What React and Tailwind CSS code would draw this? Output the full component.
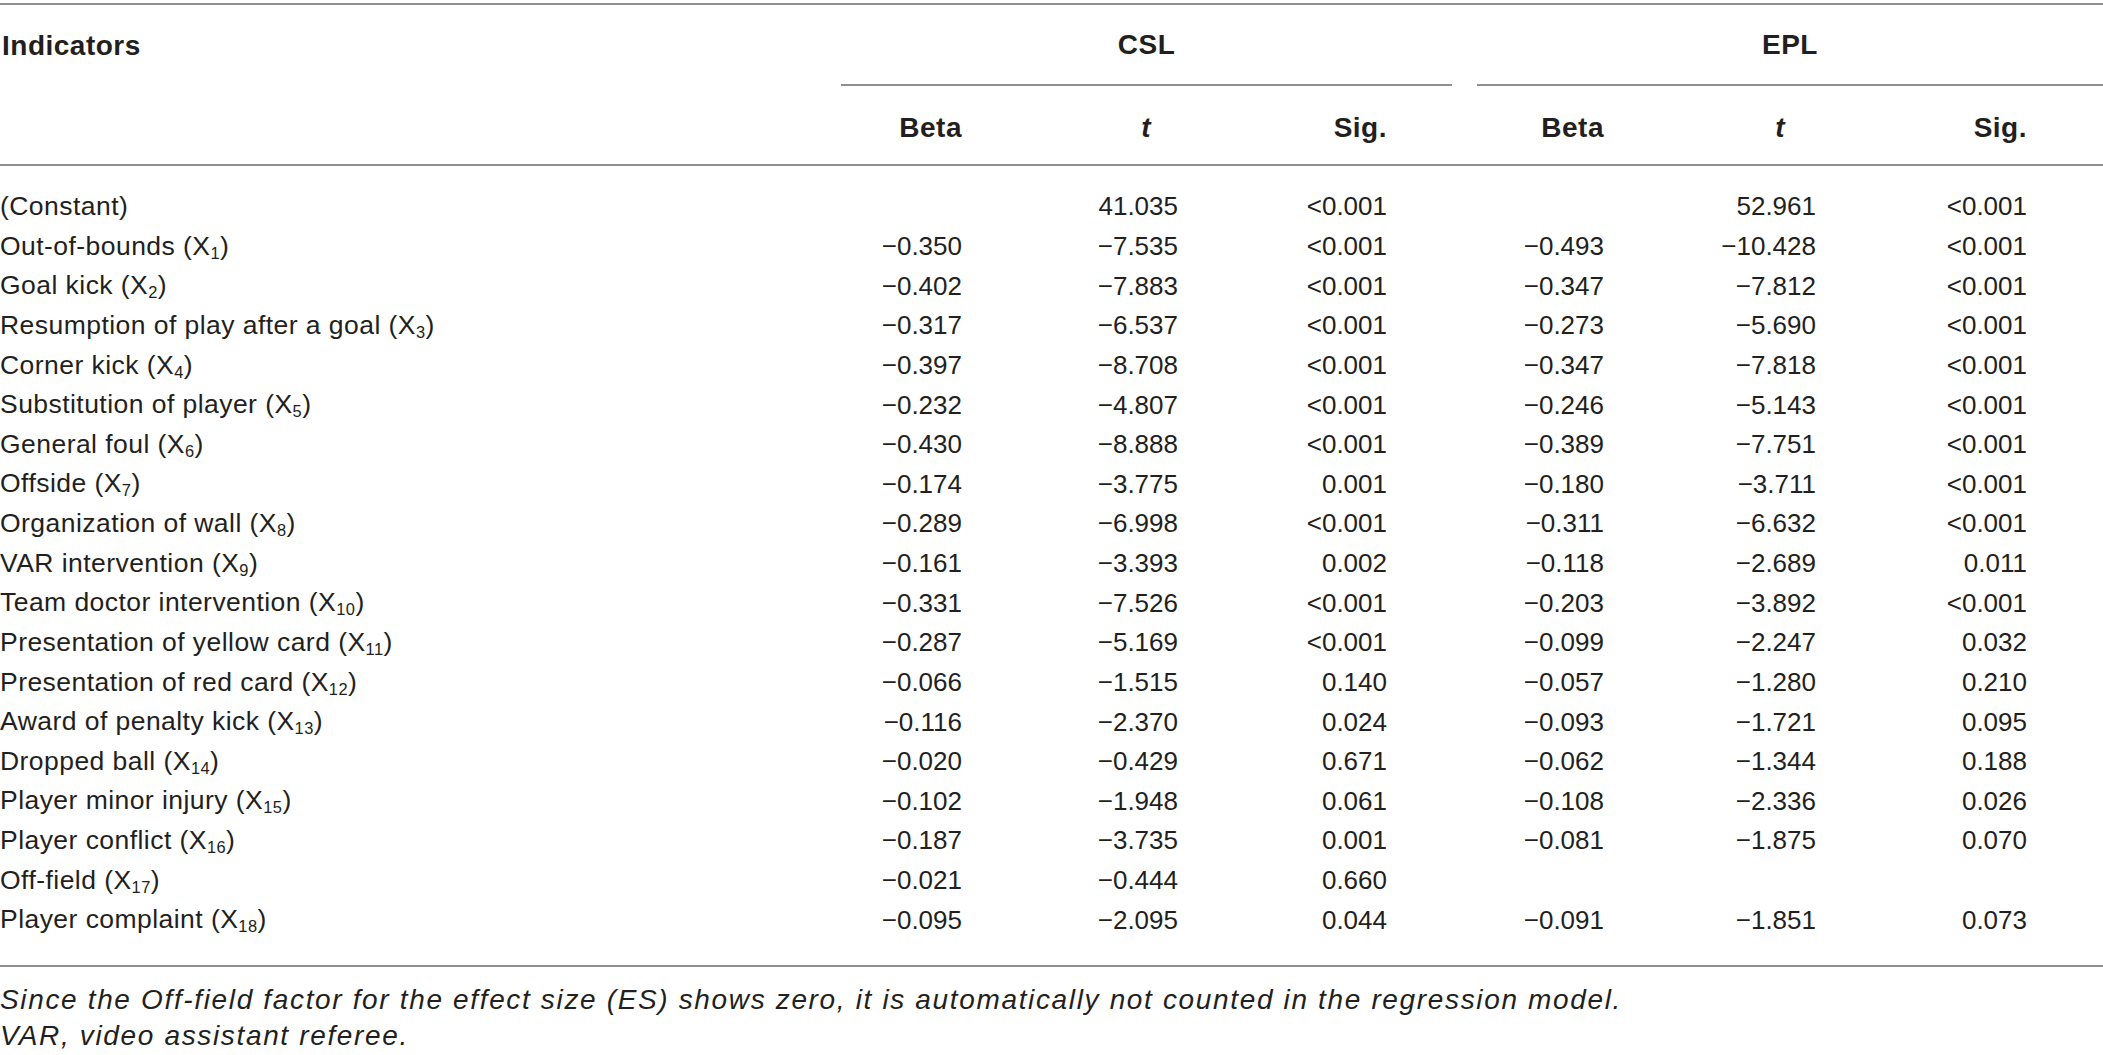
const rows = [
  { name: "(Constant)", sub: null, csl: ["", "41.035", "<0.001"], epl: ["", "52.961", "<0.001"] },
  { name: "Out-of-bounds", sub: "1", csl: ["−0.350", "−7.535", "<0.001"], epl: ["−0.493", "−10.428", "<0.001"] },
  { name: "Goal kick", sub: "2", csl: ["−0.402", "−7.883", "<0.001"], epl: ["−0.347", "−7.812", "<0.001"] },
  { name: "Resumption of play after a goal", sub: "3", csl: ["−0.317", "−6.537", "<0.001"], epl: ["−0.273", "−5.690", "<0.001"] },
  { name: "Corner kick", sub: "4", csl: ["−0.397", "−8.708", "<0.001"], epl: ["−0.347", "−7.818", "<0.001"] },
  { name: "Substitution of player", sub: "5", csl: ["−0.232", "−4.807", "<0.001"], epl: ["−0.246", "−5.143", "<0.001"] },
  { name: "General foul", sub: "6", csl: ["−0.430", "−8.888", "<0.001"], epl: ["−0.389", "−7.751", "<0.001"] },
  { name: "Offside", sub: "7", csl: ["−0.174", "−3.775", "0.001"], epl: ["−0.180", "−3.711", "<0.001"] },
  { name: "Organization of wall", sub: "8", csl: ["−0.289", "−6.998", "<0.001"], epl: ["−0.311", "−6.632", "<0.001"] },
  { name: "VAR intervention", sub: "9", csl: ["−0.161", "−3.393", "0.002"], epl: ["−0.118", "−2.689", "0.011"] },
  { name: "Team doctor intervention", sub: "10", csl: ["−0.331", "−7.526", "<0.001"], epl: ["−0.203", "−3.892", "<0.001"] },
  { name: "Presentation of yellow card", sub: "11", csl: ["−0.287", "−5.169", "<0.001"], epl: ["−0.099", "−2.247", "0.032"] },
  { name: "Presentation of red card", sub: "12", csl: ["−0.066", "−1.515", "0.140"], epl: ["−0.057", "−1.280", "0.210"] },
  { name: "Award of penalty kick", sub: "13", csl: ["−0.116", "−2.370", "0.024"], epl: ["−0.093", "−1.721", "0.095"] },
  { name: "Dropped ball", sub: "14", csl: ["−0.020", "−0.429", "0.671"], epl: ["−0.062", "−1.344", "0.188"] },
  { name: "Player minor injury", sub: "15", csl: ["−0.102", "−1.948", "0.061"], epl: ["−0.108", "−2.336", "0.026"] },
  { name: "Player conflict", sub: "16", csl: ["−0.187", "−3.735", "0.001"], epl: ["−0.081", "−1.875", "0.070"] },
  { name: "Off-field", sub: "17", csl: ["−0.021", "−0.444", "0.660"], epl: ["", "", ""] },
  { name: "Player complaint", sub: "18", csl: ["−0.095", "−2.095", "0.044"], epl: ["−0.091", "−1.851", "0.073"] },
];

const grid = "grid grid-cols-[840px_122px_216px_209px_217px_212px_211px_1fr]";

export default function App() {
  return (
    <div className="w-[2103px] bg-white pt-[3px] text-[26px] text-[#231f20] font-['Liberation_Sans',Arial,sans-serif]">
      <div className="border-t-2 border-[#8f8f8f]">
        {/* header line 1 */}
        <div className="flex h-[81px] items-center text-[28px] font-bold tracking-[0.5px]">
          <div className="w-[841px] pl-[2px]">Indicators</div>
          <div className="flex h-full w-[611px] items-center justify-center border-b-2 border-[#8f8f8f]">CSL</div>
          <div className="w-[25px]" />
          <div className="flex h-full flex-1 items-center justify-center border-b-2 border-[#8f8f8f]">EPL</div>
        </div>
        {/* header line 2 */}
        <div className={`${grid} h-[80px] items-center border-b-2 border-[#8f8f8f] pt-[5px] text-[28px] font-bold tracking-[0.5px]`}>
          <div />
          <div className="text-right">Beta</div>
          <div className="pr-[27px] text-right italic">t</div>
          <div className="text-right">Sig.</div>
          <div className="text-right">Beta</div>
          <div className="pr-[31px] text-right italic">t</div>
          <div className="text-right">Sig.</div>
          <div />
        </div>
        {/* body */}
        <div className="pt-[21px] pb-[25px]">
          {rows.map((r) => (
            <div key={r.name} className={`${grid} h-[39.64px] items-center`}>
              <div className="whitespace-nowrap text-[26.5px] tracking-[0.45px]">
                {r.name}
                {r.sub && (
                  <>
                    {" (X"}
                    <sub className="text-[0.62em]">{r.sub}</sub>
                    {")"}
                  </>
                )}
              </div>
              {[...r.csl, ...r.epl].map((v, i) => (
                <div key={i} className="text-right">{v}</div>
              ))}
              <div />
            </div>
          ))}
        </div>
      </div>
      <div className="border-t-2 border-[#8f8f8f] pt-[15px] text-[28px] italic leading-[36px] tracking-[1.65px]">
        <p>Since the Off-field factor for the effect size (ES) shows zero, it is automatically not counted in the regression model.</p>
        <p>VAR, video assistant referee.</p>
      </div>
    </div>
  );
}
